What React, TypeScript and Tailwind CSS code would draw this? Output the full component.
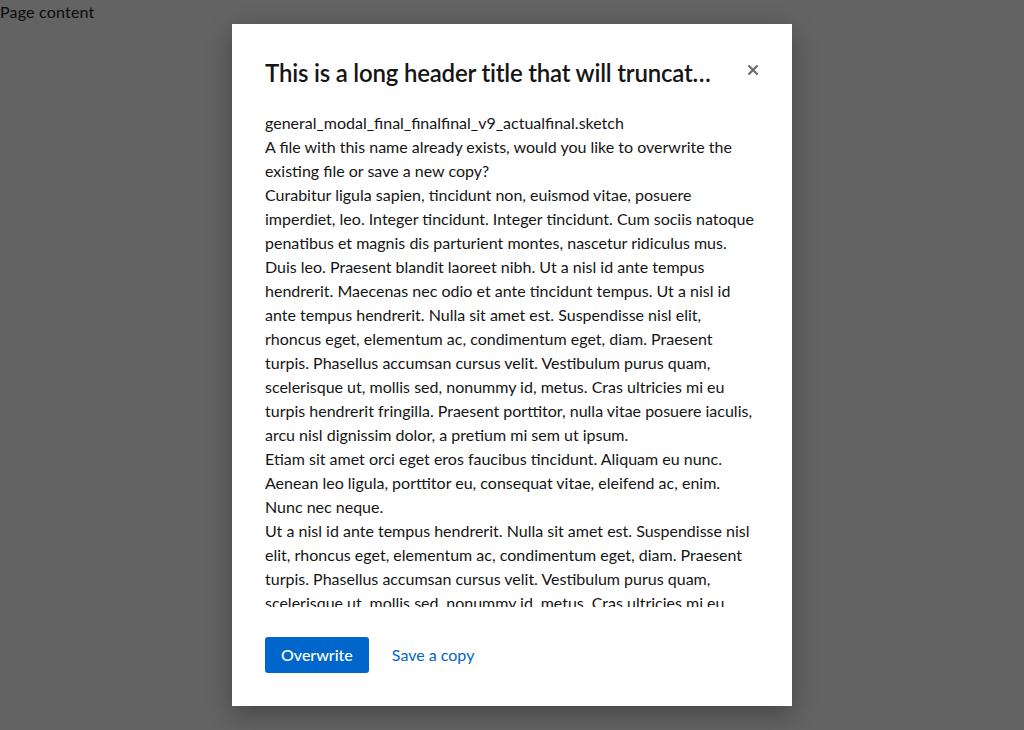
import React from "react";

const bodyLines: string[][] = [
  ["general_modal_final_finalfinal_v9_actualfinal.sketch"],
  [
    "A file with this name already exists, would you like to overwrite the",
    "existing file or save a new copy?",
  ],
  [
    "Curabitur ligula sapien, tincidunt non, euismod vitae, posuere",
    "imperdiet, leo. Integer tincidunt. Integer tincidunt. Cum sociis natoque",
    "penatibus et magnis dis parturient montes, nascetur ridiculus mus.",
    "Duis leo. Praesent blandit laoreet nibh. Ut a nisl id ante tempus",
    "hendrerit. Maecenas nec odio et ante tincidunt tempus. Ut a nisl id",
    "ante tempus hendrerit. Nulla sit amet est. Suspendisse nisl elit,",
    "rhoncus eget, elementum ac, condimentum eget, diam. Praesent",
    "turpis. Phasellus accumsan cursus velit. Vestibulum purus quam,",
    "scelerisque ut, mollis sed, nonummy id, metus. Cras ultricies mi eu",
    "turpis hendrerit fringilla. Praesent porttitor, nulla vitae posuere iaculis,",
    "arcu nisl dignissim dolor, a pretium mi sem ut ipsum.",
  ],
  [
    "Etiam sit amet orci eget eros faucibus tincidunt. Aliquam eu nunc.",
    "Aenean leo ligula, porttitor eu, consequat vitae, eleifend ac, enim.",
    "Nunc nec neque.",
  ],
  [
    "Ut a nisl id ante tempus hendrerit. Nulla sit amet est. Suspendisse nisl",
    "elit, rhoncus eget, elementum ac, condimentum eget, diam. Praesent",
    "turpis. Phasellus accumsan cursus velit. Vestibulum purus quam,",
    "scelerisque ut, mollis sed, nonummy id, metus. Cras ultricies mi eu",
    "turpis hendrerit fringilla. Praesent porttitor, nulla vitae posuere iaculis,",
    "arcu nisl dignissim dolor, a pretium mi sem ut ipsum.",
  ],
];

export default function App() {
  return (
    <div className="relative h-[730px] w-full overflow-hidden bg-white font-['Lato','Liberation_Sans',sans-serif]">
      <div className="text-[16px] leading-[24px] tracking-[0.2px] text-[#151515]">Page content</div>
      <div className="absolute inset-0 flex items-center justify-center bg-[#030303]/[0.62]">
        <div className="flex h-[682px] w-[560px] flex-col bg-white px-[33px] pb-[33px] pt-[34px] shadow-[0_8px_24px_rgba(3,3,3,0.3)]">
          <div className="flex h-[32px] shrink-0 items-start justify-between">
            <h1 className="truncate text-[24px] font-semibold leading-[30px] tracking-[-0.2px] text-[#151515]">
              This is a long header title that will truncat…
            </h1>
            <button className="mr-[-6px] flex h-[24px] w-[24px] items-center justify-center text-[#6a6e73]">
              <svg width="10" height="10" viewBox="0 0 10 10">
                <path d="M1.2 1.2 L8.8 8.8 M8.8 1.2 L1.2 8.8" stroke="currentColor" strokeWidth="2.2" strokeLinecap="square" />
              </svg>
            </button>
          </div>
          <div className="mt-[21px] min-h-0 flex-1 overflow-y-auto text-[16px] leading-[24px] text-[#151515] [scrollbar-width:none]">
            {bodyLines.map((p, i) => (
              <p key={i}>
                {p.map((l, j) => (
                  <span key={j} className="block whitespace-nowrap">
                    {l}
                  </span>
                ))}
              </p>
            ))}
          </div>
          <div className="mt-[30px] flex shrink-0 items-center gap-[8px]">
            <button className="h-[36px] rounded-[3px] bg-[#0066cc] px-[16px] text-[16px] leading-[24px] font-medium text-white">
              Overwrite
            </button>
            <button className="h-[36px] px-[15px] text-[16px] leading-[24px] text-[#0066cc]">Save a copy</button>
          </div>
        </div>
      </div>
    </div>
  );
}
